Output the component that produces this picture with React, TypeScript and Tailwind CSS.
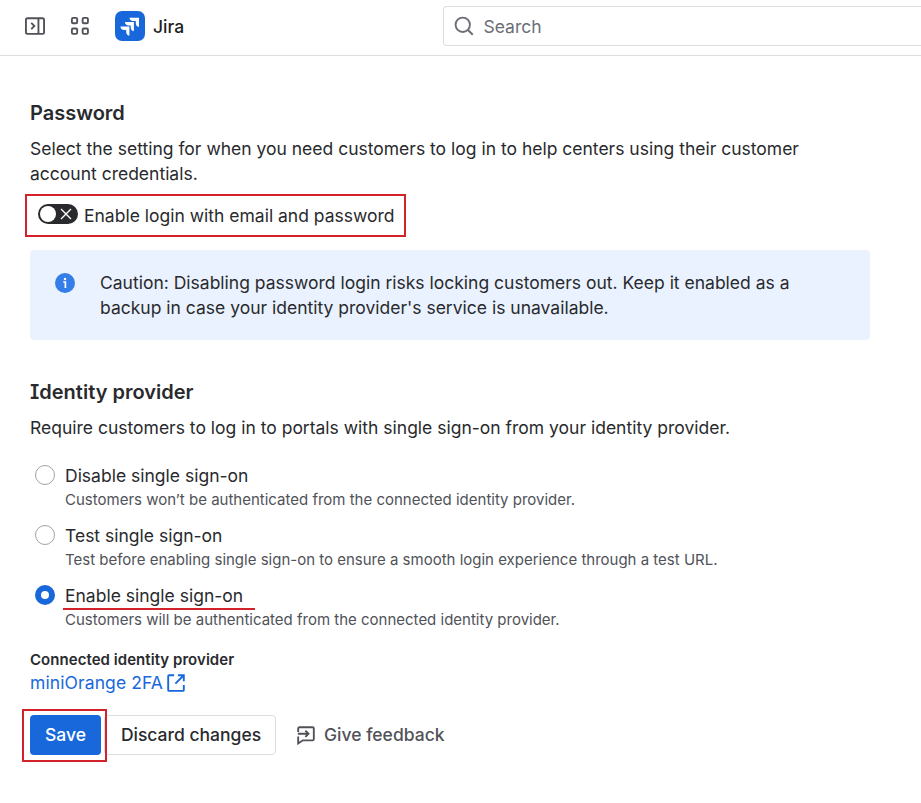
import { type ReactNode } from "react";

interface SignOnOption {
  id: string;
  label: string;
  hint: string;
}

const options: SignOnOption[] = [
  {
    id: "disable",
    label: "Disable single sign-on",
    hint: "Customers won’t be authenticated from the connected identity provider.",
  },
  {
    id: "test",
    label: "Test single sign-on",
    hint: "Test before enabling single sign-on to ensure a smooth login experience through a test URL.",
  },
  {
    id: "enable",
    label: "Enable single sign-on",
    hint: "Customers will be authenticated from the connected identity provider.",
  },
];

const selected = "enable";

function Icon({ children, className = "" }: { children: ReactNode; className?: string }) {
  return (
    <svg
      viewBox="0 0 16 16"
      fill="none"
      stroke="currentColor"
      strokeWidth="1.5"
      className={`h-5 w-5 shrink-0 ${className}`}
    >
      {children}
    </svg>
  );
}

function Header() {
  return (
    <header className="flex h-14 items-center border-b border-[#dddee1] pb-[3px] pl-[25px] text-[#505258]">
      <Icon>
        <rect x="0.75" y="1.75" width="14.5" height="12.5" rx="1.25" />
        <path d="M10.75 2v12M5 5.5 7.5 8 5 10.5" />
      </Icon>
      <Icon className="ml-[25px]">
        <rect x="1.5" y="1.5" width="4.25" height="4.25" rx="1" />
        <rect x="10.1" y="1.5" width="4.25" height="4.25" rx="1" />
        <rect x="1.5" y="10" width="4.25" height="4.25" rx="1" />
        <rect x="10.1" y="10" width="4.25" height="4.25" rx="1" />
      </Icon>
      <div className="ml-[25px] flex items-center gap-2">
        <svg viewBox="0 0 30 30" className="h-[30px] w-[30px]">
          <rect width="30" height="30" rx="7" fill="#1868db" />
          <g fill="#fff">
            <path d="M14.4 6.7H24v9.2c-2.2-.3-3.2-1.8-3.2-4v-1.8h-2.1c-2.4 0-4-1.1-4.3-3.4Z" />
            <path d="M9.9 11.1h9v9.2c-2.2-.3-3.2-1.8-3.2-4v-1.8h-2.1c-2.1 0-3.5-1.1-3.7-3.4Z" />
            <path d="M5.4 15.5h9v9.2c-2.2-.3-3.2-1.8-3.2-4v-1.8H9.1c-2.1 0-3.5-1.1-3.7-3.4Z" />
          </g>
        </svg>
        <span className="text-[17.5px] font-medium text-[#1e1f21]">Jira</span>
      </div>
      <div className="ml-auto flex h-10 w-[478px] items-center gap-2.5 rounded-l border border-r-0 border-[#dddee1] pl-[9.5px] text-[#6b6e76]">
        <Icon>
          <circle cx="7" cy="7" r="5.75" />
          <path d="m11 11 4 4" />
        </Icon>
        <span className="text-[17.5px]">Search</span>
      </div>
    </header>
  );
}

function Option({ option }: { option: SignOnOption }) {
  const checked = option.id === selected;

  return (
    <label className="flex h-15 gap-2.5">
      <span
        className={`mt-0.5 ml-[5px] flex h-5 w-5 items-center justify-center rounded-full ${
          checked ? "bg-[#1868db]" : "border border-[#a0a2a8]"
        }`}
      >
        {checked && <span className="h-2 w-2 rounded-full bg-white" />}
      </span>
      <span className="flex flex-col">
        <span className="relative leading-[25px]">
          {option.label}
          {checked && <span className="absolute -left-[2px] top-[25px] h-[2px] w-[192px] bg-[#d2232a]" />}
        </span>
        <span className="text-[15px] leading-[23px] text-[#505258]">{option.hint}</span>
      </span>
    </label>
  );
}

export default function App() {
  return (
    <div className="h-[803px] w-[921px] overflow-hidden bg-white font-['Inter',sans-serif] text-[17.5px] leading-[25px] text-[#292a2e]">
      <Header />
      <main className="w-[870px] pl-[30px] pt-[45px]">
        <h2 className="text-[20px] font-semibold leading-[25px]">Password</h2>
        <p className="mt-[10px]">
          Select the setting for when you need customers to log in to help centers using their customer
          account credentials.
        </p>
        <div className="-ml-[5px] mt-2 flex h-[43px] w-[381px] items-center border-2 border-[#d2232a] pl-[11px]">
          <span className="-mt-[3px] flex h-5 w-10 shrink-0 items-center justify-between rounded-full bg-[#292a2e] pl-[2px] pr-[6px]">
            <span className="h-4 w-4 rounded-full bg-white" />
            <svg viewBox="0 0 12 12" className="h-3 w-3" stroke="#fff" strokeWidth="1.4">
              <path d="m1 1 10 10M11 1 1 11" />
            </svg>
          </span>
          <span className="ml-1.5 whitespace-nowrap">Enable login with email and password</span>
        </div>

        <div className="mt-[13px] flex h-[90px] rounded bg-[#e9f2fe] pl-[25px] pt-5">
          <svg viewBox="0 0 20 20" className="mt-[3px] h-5 w-5 shrink-0">
            <circle cx="10" cy="10" r="10" fill="#357de8" />
            <circle cx="10" cy="5.9" r="1.25" fill="#fff" />
            <path d="M8.2 9h2.2v6" fill="none" stroke="#fff" strokeWidth="1.7" />
          </svg>
          <p className="ml-[25px] w-[710px]">
            Caution: Disabling password login risks locking customers out. Keep it enabled as a backup in
            case your identity provider's service is unavailable.
          </p>
        </div>

        {/* cv08 is Inter's capital I with serifs */}
        <h2 className="mt-10 text-[20px] font-semibold leading-[25px] [font-feature-settings:'cv08']">
          Identity provider
        </h2>
        <p className="mt-[10px]">
          Require customers to log in to portals with single sign-on from your identity provider.
        </p>
        <div className="mt-[23px]">
          {options.map((option) => (
            <Option key={option.id} option={option} />
          ))}
        </div>

        <div className="mt-[7px] text-[15px] font-semibold leading-[20px] tracking-[0.05px]">
          Connected identity provider
        </div>
        <a href="#" className="flex items-center gap-1 text-[#1868db]">
          <span className="tracking-[0.1px]">miniOrange 2FA</span>
          <Icon className="-ml-[1px]">
            <path d="M6.5 1.75H2.5a.75.75 0 0 0-.75.75v11c0 .4.35.75.75.75h11c.4 0 .75-.35.75-.75V9.5M9.5 1.75h4.75V6.5M14 2 7.5 8.5" />
          </Icon>
        </a>

        <div className="-ml-2 mt-[14px] flex items-center font-medium">
          <div className="z-10 h-[53px] w-[85px] shrink-0 border-2 border-[#d2232a] pl-[6px] pt-1">
            <button className="h-10 w-[71px] rounded bg-[#1868db] leading-[38px] text-white">Save</button>
          </div>
          <button className="-ml-[3px] -mt-[1px] h-10 w-[172px] rounded border border-[#dddee1] pb-px pl-[2px]">
            Discard changes
          </button>
          <button className="-mt-[2px] ml-5 flex items-center gap-2 text-[#505258]">
            <Icon>
              <path d="M1.75 5.5V2.75a1 1 0 0 1 1-1h10.5a1 1 0 0 1 1 1v8.5a1 1 0 0 1-1 1H5.5l-3.75 2.5V9.25M1.5 7h8M7.5 4.5 10 7 7.5 9.5" />
            </Icon>
            Give feedback
          </button>
        </div>
      </main>
    </div>
  );
}
